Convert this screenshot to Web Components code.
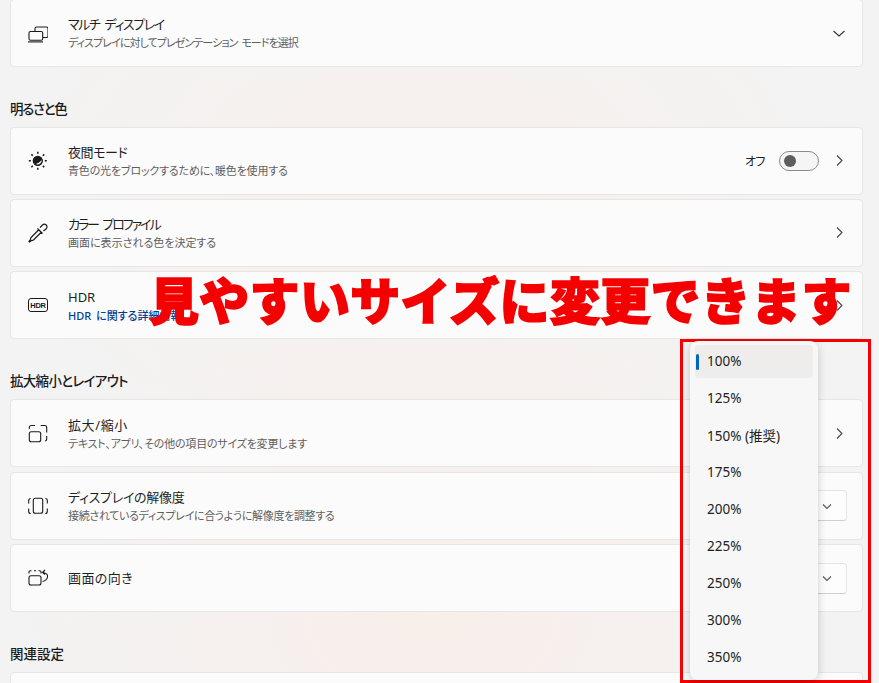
<!DOCTYPE html>
<html lang="ja">
<head>
<meta charset="utf-8">
<title>ディスプレイ</title>
<style>
html, body { margin: 0; height: 100%; overflow: hidden; }
body {
  font-family: "Noto Sans", "Noto Sans CJK JP", sans-serif;
  background:
    radial-gradient(ellipse 420px 330px at 430px 610px, #f8eeea 0%, rgba(248,238,234,0) 100%),
    radial-gradient(ellipse 420px 300px at 420px 200px, #f8f0ec 0%, rgba(248,240,236,0) 100%),
    #f3f3f3;
}
</style>
</head>
<body>
<settings-page></settings-page>

<script>
const icons = {
  display: `<path d="M7 8V5.5A1.5 1.5 0 0 1 8.5 4h10A1.5 1.5 0 0 1 20 5.5v7.500a1.500 1.500 0 0 1-1.500 1.500H15"/><rect x="1" y="8.500" width="13.700" height="8.800" rx="1.500"/><path d="M0 18.900h15"/>`,
  night: `<circle cx="9.800" cy="9.800" r="4.600" fill="#1a1a1a"/><path d="M7.800 13A4 4 0 0 0 13.500 8.500C13 10.500 10 12.500 7.800 13Z" fill="#fff" stroke="none"/><path stroke-width="1.500" d="M9.800 .8v2M9.800 16.800v2M.8 9.800h2M16.800 9.800h2M3.400 3.400l1.400 1.400M14.800 14.800l1.400 1.400M3.400 16.200l1.400-1.400M14.800 4.800l1.400-1.400"/>`,
  dropper: `<path stroke-width="1.250" d="M11 6.500L3 14.500Q2.500 15.500 2.500 16.500L1 18.500 1.500 19 3.500 17.500Q4.500 17.500 5.500 17L13.500 9M9.500 5.500L14.500 10.500M12 4.500L14.500 2A2.600 2.600 0 0 1 18.200 5.700L15.500 8"/>`,
  scale: `<rect x="1.300" y="8.800" width="11.400" height="10" rx="2"/><path d="M1.300 6V4.500A2 2 0 0 1 3.300 2.500H7M12.700 2.500H16.700A2 2 0 0 1 18.700 4.500V9.500M18.700 13V16A2 2 0 0 1 17 18"/>`,
  resolution: `<rect x="5.300" y="2.300" width="9.400" height="15" rx="2"/><path d="M2.700 2.500A2 2 0 0 0 .7 4.500V7.500M.7 12.500V15.500A2 2 0 0 0 2.700 17.500M17.300 2.500A2 2 0 0 1 19.300 4.500V7.500M19.300 12.500V15.500A2 2 0 0 1 17.300 17.500"/>`,
  orientation: `<rect x="1" y="7.700" width="12" height="9.300" rx="2"/><path d="M1 5.500V4A1.300 1.300 0 0 1 2.300 2.700H3.500M6 2.700H8M10.500 2.700H11.700A1.300 1.300 0 0 1 13 4V5.500M15 4.500C18.500 5 20 7 19.500 9C19 11.500 16.500 13 14.500 13.500M17 2L14.500 4.500L17 6.500"/>`,
  chevronRight: `<path d="M6 2.500L11 7.500l-5 5"/>`,
  chevronDown: `<path d="M1.500 5l5.500 5 5.500-5"/>`,
  chevronSmall: `<path d="M3 5.500l4 4 4-4"/>`
};

class SectionTitle extends HTMLElement {
  constructor() {
    super();
    this.attachShadow({ mode: 'open' }).innerHTML = `
      <style>
        :host { display: flex; align-items: flex-end; box-sizing: border-box; height: 60.200px; padding-bottom: 10px;
          font: 500 13.500px/18px "Noto Sans CJK JP", sans-serif; color: #1b1b1b; font-feature-settings: "palt"; }
      </style><slot></slot>`;
  }
}

class SettingsIcon extends HTMLElement {
  constructor() {
    super();
    const size = this.getAttribute('size') || 20;
    const box = this.getAttribute('box') || 20;
    const color = this.getAttribute('color') || '#1a1a1a';
    this.attachShadow({ mode: 'open' }).innerHTML = `
      <style>
        :host { display: block; line-height: 0; }
        svg { display: block; width: ${size}px; height: ${size}px; fill: none; stroke: ${color}; stroke-width: 1.100; }
      </style>
      <svg viewBox="0 0 ${box} ${box}">${icons[this.getAttribute('name')] || ''}</svg>`;
  }
}

class HdrBadge extends HTMLElement {
  constructor() {
    super();
    this.attachShadow({ mode: 'open' }).innerHTML = `
      <style>
        :host { display: flex; box-sizing: border-box; width: 20px; height: 14px; border: 1.300px solid #1a1a1a; border-radius: 3px;
          align-items: center; justify-content: center; font: 700 7.500px/1 "Liberation Sans", sans-serif; color: #1a1a1a; letter-spacing: -.2px; }
      </style>HDR`;
  }
}

class SettingsCard extends HTMLElement {
  constructor() {
    super();
    this.attachShadow({ mode: 'open' }).innerHTML = `
      <style>
        :host { display: flex; align-items: center; box-sizing: border-box; height: 68px; padding: 0 16px 0 17px;
          background: rgba(252,252,252,.92); border: 1px solid #e8e6e5; border-radius: 4px; }
        .icon { width: 20px; flex: none; }
        .text { flex: 1; margin-left: 20px; min-width: 0; padding-top: 2px; display: flex; flex-direction: column; white-space: nowrap; }
        :host([single]) .text { padding-top: 0; }
        .title { font-size: 13px; line-height: 18px; color: #1f1f1f; font-feature-settings: "palt"; }
        .desc { font-size: 11px; line-height: 18px; margin-top: 1px; color: #5f5f5f; font-feature-settings: "palt"; }
        :host([single]) .desc { display: none; }
        .action { display: flex; align-items: center; flex: none; }
      </style>
      <div class="icon"><slot name="icon"></slot></div>
      <div class="text"><div class="title"><slot name="title"></slot></div><div class="desc"><slot name="desc"></slot></div></div>
      <div class="action"><slot name="action"></slot></div>`;
  }
}

class ToggleSwitch extends HTMLElement {
  constructor() {
    super();
    this.attachShadow({ mode: 'open' }).innerHTML = `
      <style>
        :host { display: flex; align-items: center; }
        span { font: 12px/18px "Noto Sans CJK JP", sans-serif; color: #222; margin-right: 14px; font-feature-settings: "palt"; letter-spacing: -.5px; }
        .track { box-sizing: border-box; width: 40px; height: 20px; border: 1px solid #8a8a8a; border-radius: 10px; background: #f6f5f5; padding: 3px 3.500px; }
        .thumb { width: 12px; height: 12px; border-radius: 50%; background: #5d5d5d; }
      </style>
      <span><slot></slot></span><div class="track"><div class="thumb"></div></div>`;
  }
}

class ComboBox extends HTMLElement {
  constructor() {
    super();
    this.attachShadow({ mode: 'open' }).innerHTML = `
      <style>
        :host { display: flex; align-items: center; justify-content: flex-end; box-sizing: border-box; width: 140px; height: 31px; margin-right: -1px; padding-right: 12px;
          background: #fdfdfd; border: 1px solid #e6e5e5; border-bottom-color: #cfcfcf; border-radius: 4px; }
      </style>
      <settings-icon name="chevronSmall" size="14" box="14" color="#555"></settings-icon>`;
  }
}

class ScaleFlyout extends HTMLElement {
  constructor() {
    super();
    const items = this.getAttribute('items').split(',');
    this.attachShadow({ mode: 'open' }).innerHTML = `
      <style>
        :host { position: absolute; left: 690px; top: 341px; box-sizing: border-box; width: 128px; height: 339px; padding: 4px 5px; background: #f8f7f7;
          border-radius: 8px; box-shadow: 0 2px 8px rgba(0,0,0,.2); display: flex; flex-direction: column;
          font: 13.500px "Noto Sans", "Noto Sans CJK JP", sans-serif; color: #222; }
        div { position: relative; flex: none; box-sizing: border-box; height: 37px; padding: 0 0 2px 12px; display: flex; align-items: center; border-radius: 4px; }
        .on { background: #efedec; height: 33px; margin-bottom: 2px; }
        .on::before { content: ""; position: absolute; left: 1px; top: 9px; width: 3px; height: 16px; border-radius: 2px; background: #0067c0; }
      </style>
      ${items.map((item, i) => `<div class="${i === 0 ? 'on' : ''}">${item}</div>`).join('')}`;
  }
}

class PromoBanner extends HTMLElement {
  constructor() {
    super();
    this.attachShadow({ mode: 'open' }).innerHTML = `
      <style>
        :host { position: absolute; left: 149px; top: 262px; white-space: nowrap; font: 900 50px/72px "Noto Sans CJK JP", sans-serif; color: #f50000;
          -webkit-text-stroke: 1.600px #f50000; letter-spacing: .3px; }
      </style><slot></slot>`;
  }
}

class SettingsPage extends HTMLElement {
  constructor() {
    super();
    const row = (icon, title, titleSp, desc, descSp, action) => `
      <settings-card ${desc ? '' : 'single'}>
        <div slot="icon">${icon}</div>
        <span slot="title" style="letter-spacing:${titleSp}px;word-spacing:3px">${title}</span>
        ${desc ? `<span slot="desc" style="letter-spacing:${descSp}px;word-spacing:2px">${desc}</span>` : ''}
        <div slot="action" class="act">${action || ''}</div>
      </settings-card>`;
    const ic = name => `<settings-icon name="${name}"></settings-icon>`;
    const right = `<settings-icon name="chevronRight" size="15" box="15" color="#444"></settings-icon>`;
    const down = `<settings-icon name="chevronDown" size="14" box="14" color="#333"></settings-icon>`;
    this.attachShadow({ mode: 'open' }).innerHTML = `
      <style>
        :host { display: block; padding: 0 16px 0 10px; margin-top: -1.500px; }
        .group { display: flex; flex-direction: column; gap: 4.300px; }
        .act { display: flex; align-items: center; gap: 12px; }
        .link { color: #003e92; font-weight: 500; }
        .red { position: absolute; left: 680px; top: 339px; width: 191px; height: 344px; border: 3px solid #f50000; box-sizing: border-box; }
        .cut { height: 12px; overflow: hidden; }
      </style>
      <div class="group">
        ${row(ic('display'), 'マルチ ディスプレイ', -1.4, 'ディスプレイに対してプレゼンテーション モードを選択', -.93, down)}
      </div>
      <section-title style="letter-spacing:-1.3px">明るさと色</section-title>
      <div class="group">
        ${row(ic('night'), '夜間モード', -.4, '青色の光をブロックするために、暖色を使用する', -.18, '<toggle-switch>オフ</toggle-switch>' + right)}
        ${row(ic('dropper'), 'カラー プロファイル', -2.05, '画面に表示される色を決定する', 0, right)}
        ${row('<hdr-badge></hdr-badge>', 'HDR', 0, '<span class="link">HDR に関する詳細情報</span>', 0, right)}
      </div>
      <section-title style="letter-spacing:-.7px">拡大縮小とレイアウト</section-title>
      <div class="group">
        ${row(ic('scale'), '拡大/縮小', .6, 'テキスト、アプリ、その他の項目のサイズを変更します', -.2, right)}
        ${row(ic('resolution'), 'ディスプレイの解像度', -.3, '接続されているディスプレイに合うように解像度を調整する', -.33, '<combo-box></combo-box>')}
        ${row(ic('orientation'), '画面の向き', .4, '', 0, '<combo-box></combo-box>')}
      </div>
      <section-title>関連設定</section-title>
      <div class="cut">
        ${row('', '', 0, '', 0, '')}
      </div>
      <promo-banner>見やすいサイズに変更できます</promo-banner>
      <div class="red"></div>
      <scale-flyout items="100%,125%,150% (推奨),175%,200%,225%,250%,300%,350%"></scale-flyout>`;
  }
}

customElements.define('section-title', SectionTitle);
customElements.define('settings-icon', SettingsIcon);
customElements.define('hdr-badge', HdrBadge);
customElements.define('settings-card', SettingsCard);
customElements.define('toggle-switch', ToggleSwitch);
customElements.define('combo-box', ComboBox);
customElements.define('scale-flyout', ScaleFlyout);
customElements.define('promo-banner', PromoBanner);
customElements.define('settings-page', SettingsPage);
</script>
</body>
</html>
